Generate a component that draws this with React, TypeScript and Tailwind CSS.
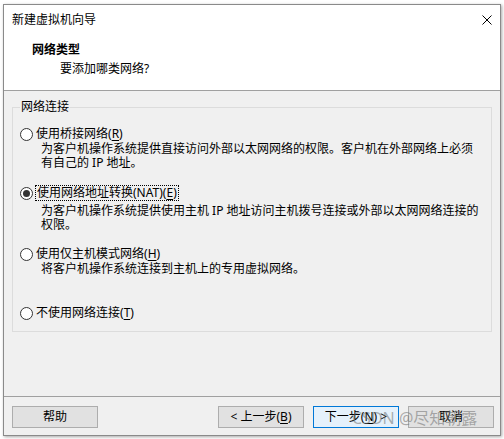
import React from 'react';

const font = "font-['Noto_Sans','Noto_Sans_CJK_SC',sans-serif]";

const Radio = ({ checked }: { checked?: boolean }) => (
  <span className="flex h-[13px] w-[13px] shrink-0 items-center justify-center rounded-full border border-[#333333] bg-white">
    {checked && <span className="h-[7px] w-[7px] rounded-full bg-[#333333]" />}
  </span>
);

const Option = ({
  label,
  keyChar,
  tail,
  checked,
  focused,
}: {
  label: string;
  keyChar: string;
  tail?: string;
  checked?: boolean;
  focused?: boolean;
}) => (
  <div className="flex h-[16px] items-center pl-[7px]">
    <Radio checked={checked} />
    <span
      className={
        focused
          ? 'ml-[2px] border border-dotted border-black px-[1px] leading-[14px]'
          : 'ml-[3px] leading-[14px]'
      }
    >
      {label}(<span className="underline underline-offset-2">{keyChar}</span>){tail}
    </span>
  </div>
);

const WinButton = ({ children, primary }: { children: React.ReactNode; primary?: boolean }) => (
  <button
    className={
      primary
        ? 'flex h-[22px] w-[86px] items-center justify-center border border-[#0078d7] bg-[#e5f1fb] text-[12px] text-black'
        : 'flex h-[22px] w-[86px] items-center justify-center border border-[#adadad] bg-[#e1e1e1] text-[12px] text-black'
    }
  >
    {children}
  </button>
);

const App = () => {
  return (
    <div className={`h-[439px] w-[504px] overflow-hidden bg-white pl-[3px] pt-[4px] text-[12px] text-black ${font}`}>
      <div className="relative flex h-[432px] w-[498px] flex-col border border-[#8a8a8a] bg-[#f0f0f0] shadow-[1px_1px_3px_rgba(0,0,0,0.35)]">
        {/* title + header */}
        <div className="h-[86px] shrink-0 border-b border-[#a0a0a0] bg-white">
          <div className="flex h-[30px] items-center justify-between pl-[8px] pr-[8px]">
            <span className="leading-[14px]">新建虚拟机向导</span>
            <svg width="10" height="10" viewBox="0 0 10 10">
              <path d="M0.5 0.5 L9.5 9.5 M9.5 0.5 L0.5 9.5" stroke="#000" strokeWidth="1" />
            </svg>
          </div>
          <div className="mt-[7px] pl-[28px] font-bold leading-[16px]">网络类型</div>
          <div className="mt-[3px] pl-[56px] leading-[16px]">要添加哪类网络?</div>
        </div>

        {/* body */}
        <div className="flex-1 pl-[8px] pt-[16px]">
          <div className="relative h-[225px] w-[480px] border border-[#dcdcdc] pb-[9px]">
            <span className="absolute -top-[8px] left-[7px] bg-[#f0f0f0] px-[1px] leading-[14px]">网络连接</span>
            <div className="mt-[18px]">
              <Option label="使用桥接网络" keyChar="R" />
              <div className="whitespace-nowrap pl-[28px] leading-[14px]">
                为客户机操作系统提供直接访问外部以太网网络的权限。客户机在外部网络上必须
                <br />
                有自己的 IP 地址。
              </div>
            </div>
            <div className="mt-[15px]">
              <Option label="使用网络地址转换(NAT)" keyChar="E" checked focused />
              <div className="mt-[3px] whitespace-nowrap pl-[28px] leading-[14px]">
                为客户机操作系统提供使用主机 IP 地址访问主机拨号连接或外部以太网网络连接的
                <br />
                权限。
              </div>
            </div>
            <div className="mt-[14px]">
              <Option label="使用仅主机模式网络" keyChar="H" />
              <div className="whitespace-nowrap pl-[28px] leading-[14px]">
                将客户机操作系统连接到主机上的专用虚拟网络。
              </div>
            </div>
            <div className="mt-[29px]">
              <Option label="不使用网络连接" keyChar="T" />
            </div>
          </div>
        </div>

        {/* footer */}
        <div className="flex h-[39px] shrink-0 items-start justify-between border-t border-[#a0a0a0] pl-[8px] pr-[6px] pt-[9px]">
          <WinButton>帮助</WinButton>
          <div className="flex gap-[9px]">
            <WinButton>
              &lt; 上一步(<span className="underline underline-offset-2">B</span>)
            </WinButton>
            <WinButton primary>
              下一步(<span className="underline underline-offset-2">N</span>) &gt;
            </WinButton>
            <WinButton>取消</WinButton>
          </div>
        </div>

        {/* watermark */}
        <span className="pointer-events-none absolute left-[348px] top-[403px] whitespace-nowrap text-[16px] leading-[20px] text-[rgba(110,110,110,0.55)]">
          CSDN @尽知朝露
        </span>
      </div>
    </div>
  );
};

export default App;
